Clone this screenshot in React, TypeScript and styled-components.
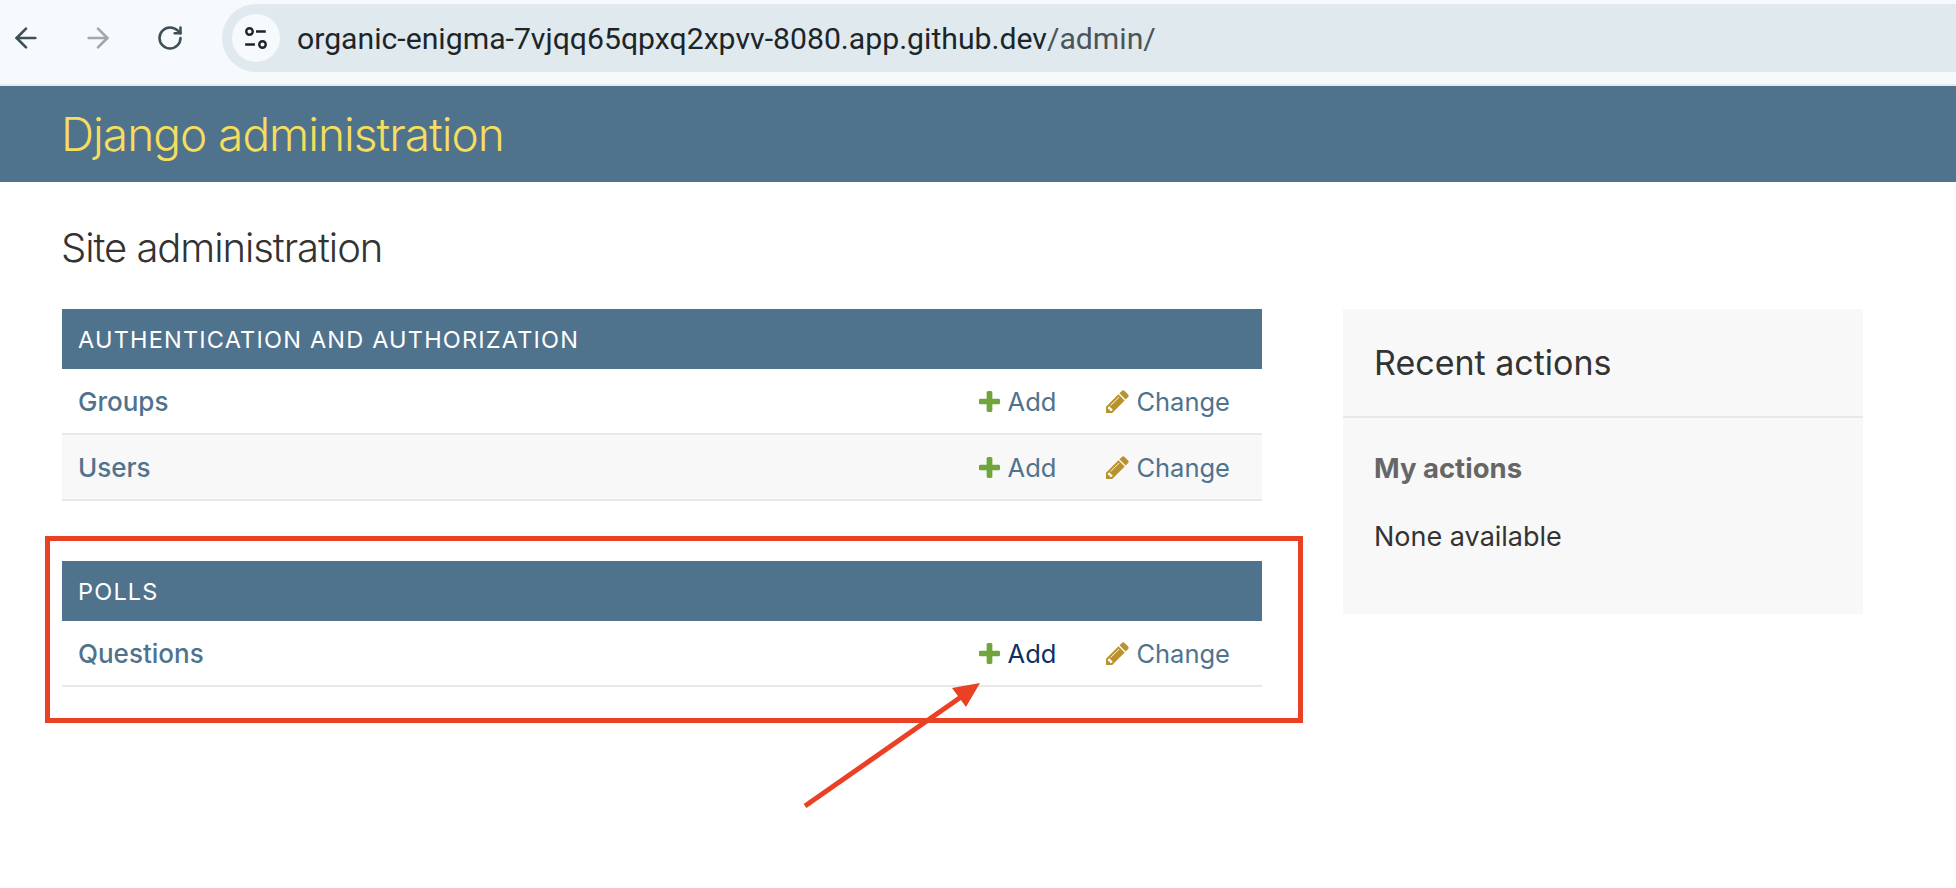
import styled, { createGlobalStyle } from "styled-components";
import { ArrowLeft, ArrowRight, RotateCw } from "lucide-react";

const GlobalStyle = createGlobalStyle`
  html, body {
    margin: 0;
    padding: 0;
    background: #fff;
    font-family: Inter, "Liberation Sans", sans-serif;
    color: #333;
  }
`;

const Page = styled.div`
  position: relative;
  width: 1956px;
  height: 888px;
  overflow: hidden;
`;

const BrowserBar = styled.div`
  height: 86px;
  box-sizing: border-box;
  padding: 0 0 8px 7px;
  display: flex;
  align-items: center;
  background: #f6fafd;
  border-bottom: 2px solid #e6ebee;
`;

const NavButton = styled.div<{ $dim?: boolean }>`
  width: 38px;
  height: 38px;
  margin-right: 34px;
  display: flex;
  align-items: center;
  justify-content: center;
  color: ${(p) => (p.$dim ? "#a3a7a9" : "#3e4f56")};
`;

const AddressBar = styled.div`
  flex: 1;
  height: 68px;
  margin-left: -1px;
  padding-left: 10px;
  display: flex;
  align-items: center;
  border-radius: 34px 0 0 34px;
  background: #dfe9ee;
`;

const SiteInfo = styled.div`
  width: 48px;
  height: 48px;
  border-radius: 50%;
  background: #f6fafd;
  display: flex;
  align-items: center;
  justify-content: center;
  margin-right: 17px;
`;

const Url = styled.div`
  font-family: Roboto, sans-serif;
  font-size: 30.2px;
  color: #1c2529;
  white-space: nowrap;
`;

const UrlPath = styled.span`
  color: #4a5559;
`;

const Header = styled.header`
  height: 96px;
  box-sizing: border-box;
  padding: 0 61px;
  display: flex;
  align-items: center;
  background: #4f738d;
`;

const Branding = styled.h1`
  margin: 0;
  font-size: 46px;
  font-weight: 300;
  letter-spacing: -1px;
  color: #f5dd5d;
`;

const Content = styled.main`
  padding: 43px 62px 0;
`;

const PageTitle = styled.h2`
  margin: 0 0 38px -1px;
  font-size: 40px;
  line-height: 46px;
  font-weight: 300;
  letter-spacing: -1.05px;
  color: #333;
`;

const Columns = styled.div`
  display: flex;
  align-items: flex-start;
  gap: 81px;
`;

const Modules = styled.div`
  width: 1200px;
  display: flex;
  flex-direction: column;
  gap: 60px;
`;

const ModuleCaption = styled.div`
  height: 60px;
  box-sizing: border-box;
  padding: 0 16px;
  display: flex;
  align-items: center;
  background: #4f738d;
  color: #fff;
  font-size: 23.5px;
  letter-spacing: 1.2px;
  text-transform: uppercase;
`;

const ModuleRow = styled.div<{ $shaded?: boolean }>`
  height: 66px;
  box-sizing: border-box;
  padding: 0 32px 0 16px;
  display: flex;
  align-items: center;
  border-bottom: 2px solid #e8e8e8;
  background: ${(p) => (p.$shaded ? "#f8f8f8" : "#fff")};
`;

const RowName = styled.div`
  flex: 1;
  font-size: 26px;
  font-weight: 500;
  color: #4f738d;
`;

const RowAction = styled.div<{ $active?: boolean; $tight?: boolean }>`
  display: flex;
  align-items: center;
  gap: ${(p) => (p.$tight ? "7px" : "8px")};
  margin-left: 50px;
  font-size: 25.5px;
  color: ${(p) => (p.$active ? "#0f2f63" : "#4f738d")};
`;

const Sidebar = styled.aside`
  width: 520px;
  height: 305px;
  background: #f8f8f8;
`;

const SidebarHead = styled.div`
  height: 109px;
  box-sizing: border-box;
  padding: 0 31px;
  display: flex;
  align-items: center;
  border-bottom: 2px solid #e8e8e8;
  font-size: 34px;
  font-weight: 400;
  color: #333;
`;

const SidebarBody = styled.div`
  padding: 33px 31px 0;
`;

const SidebarLabel = styled.div`
  font-size: 27.5px;
  font-weight: 700;
  color: #666;
  margin-bottom: 35px;
`;

const SidebarEmpty = styled.div`
  font-size: 27px;
  color: #333;
`;

const HighlightBox = styled.div`
  position: absolute;
  left: 45px;
  top: 536px;
  width: 1258px;
  height: 187px;
  box-sizing: border-box;
  border: 5px solid #ea4125;
`;

const ArrowOverlay = styled.svg`
  position: absolute;
  left: 780px;
  top: 660px;
`;

const PlusIcon = () => (
  <svg width="21" height="21" viewBox="192 188 1408 1408">
    <path
      d="M1600 796v192q0 40-28 68t-68 28h-416v416q0 40-28 68t-68 28h-192q-40 0-68-28t-28-68v-416h-416q-40 0-68-28t-28-68v-192q0-40 28-68t68-28h416v-416q0-40 28-68t68-28h192q40 0 68 28t28 68v416h416q40 0 68 28t28 68z"
      fill="#70a53c"
    />
  </svg>
);

const PencilIcon = () => (
  <svg width="23" height="23" viewBox="128 128 1536 1536">
    <path
      d="M491 1536l91-91-235-235-91 91v107h128v128h107zm523-928q0-22-22-22-10 0-17 7l-542 542q-7 7-7 17 0 22 22 22 10 0 17-7l542-542q7-7 7-17zm-54-192l416 416-832 832h-416v-416zm683 96q0 53-37 90l-166 166-416-416 166-165q36-38 90-38 53 0 91 38l235 234q37 39 37 91z"
      fill="#b8922e"
    />
  </svg>
);

const SiteInfoIcon = () => (
  <svg width="26" height="26" viewBox="0 0 24 24" fill="none" stroke="#1c2529" strokeWidth="2.200">
    <circle cx="6" cy="6" r="3" />
    <path d="M12 6h9M2 18h9" />
    <circle cx="18" cy="18" r="3" />
  </svg>
);

type Row = { name: string; shaded?: boolean; activeAdd?: boolean };

const Actions = ({ activeAdd }: { activeAdd?: boolean }) => (
  <>
    <RowAction $active={activeAdd}>
      <PlusIcon />
      Add
    </RowAction>
    <RowAction $tight>
      <PencilIcon />
      Change
    </RowAction>
  </>
);

const Module = ({ title, rows }: { title: string; rows: Row[] }) => (
  <section>
    <ModuleCaption>{title}</ModuleCaption>
    {rows.map((row) => (
      <ModuleRow key={row.name} $shaded={row.shaded}>
        <RowName>{row.name}</RowName>
        <Actions activeAdd={row.activeAdd} />
      </ModuleRow>
    ))}
  </section>
);

export default function App() {
  return (
    <Page>
      <GlobalStyle />
      <BrowserBar>
        <NavButton>
          <ArrowLeft size={32} strokeWidth={2} />
        </NavButton>
        <NavButton $dim>
          <ArrowRight size={32} strokeWidth={2} />
        </NavButton>
        <NavButton>
          <RotateCw size={28} strokeWidth={2.2} />
        </NavButton>
        <AddressBar>
          <SiteInfo>
            <SiteInfoIcon />
          </SiteInfo>
          <Url>
            organic-enigma-7vjqq65qpxq2xpvv-8080.app.github.dev<UrlPath>/admin/</UrlPath>
          </Url>
        </AddressBar>
      </BrowserBar>
      <Header>
        <Branding>Django administration</Branding>
      </Header>
      <Content>
        <PageTitle>Site administration</PageTitle>
        <Columns>
          <Modules>
            <Module
              title="Authentication and Authorization"
              rows={[{ name: "Groups" }, { name: "Users", shaded: true }]}
            />
            <Module title="Polls" rows={[{ name: "Questions", activeAdd: true }]} />
          </Modules>
          <Sidebar>
            <SidebarHead>Recent actions</SidebarHead>
            <SidebarBody>
              <SidebarLabel>My actions</SidebarLabel>
              <SidebarEmpty>None available</SidebarEmpty>
            </SidebarBody>
          </Sidebar>
        </Columns>
      </Content>
      <HighlightBox />
      <ArrowOverlay width="210" height="160" viewBox="0 0 210 160">
        <path d="M25 146 L 181 37" stroke="#ea4125" strokeWidth="5" fill="none" />
        <path d="M200 23 L 172 28 L 186 47z" fill="#ea4125" />
      </ArrowOverlay>
    </Page>
  );
}
